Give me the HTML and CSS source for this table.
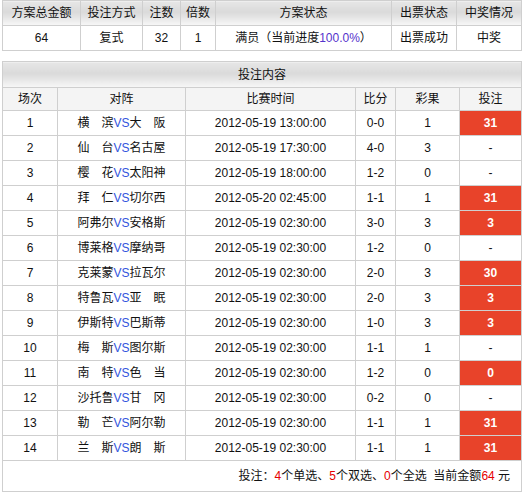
FILE: index.html
```html
<!DOCTYPE html>
<html>
<head>
<meta charset="utf-8">
<link rel="stylesheet" href="styles.css">
</head>
<body>
<div class="page">
<table class="summary">
  <colgroup>
    <col style="width:78px"><col style="width:62px"><col style="width:38px"><col style="width:35px"><col style="width:176px"><col style="width:65px"><col style="width:65px">
  </colgroup>
  <tr class="head">
    <th>方案总金额</th><th>投注方式</th><th>注数</th><th>倍数</th><th>方案状态</th><th>出票状态</th><th>中奖情况</th>
  </tr>
  <tr class="row">
    <td>64</td><td>复式</td><td>32</td><td>1</td><td>满员（当前进度<span class="pct">100.0%</span>）</td><td>出票成功</td><td>中奖</td>
  </tr>
</table>

<table class="detail">
  <colgroup>
    <col style="width:55px"><col style="width:128px"><col style="width:170px"><col style="width:40px"><col style="width:64px"><col style="width:62px">
  </colgroup>
  <tr class="title"><th colspan="6">投注内容</th></tr>
  <tr class="cols"><th>场次</th><th>对阵</th><th>比赛时间</th><th>比分</th><th>彩果</th><th>投注</th></tr>
  <tr class="row"><td>1</td><td>横　滨<span class="vs">VS</span>大　阪</td><td>2012-05-19 13:00:00</td><td>0-0</td><td>1</td><td class="hit">31</td></tr>
  <tr class="row"><td>2</td><td>仙　台<span class="vs">VS</span>名古屋</td><td>2012-05-19 17:30:00</td><td>4-0</td><td>3</td><td>-</td></tr>
  <tr class="row"><td>3</td><td>樱　花<span class="vs">VS</span>太阳神</td><td>2012-05-19 18:00:00</td><td>1-2</td><td>0</td><td>-</td></tr>
  <tr class="row"><td>4</td><td>拜　仁<span class="vs">VS</span>切尔西</td><td>2012-05-20 02:45:00</td><td>1-1</td><td>1</td><td class="hit">31</td></tr>
  <tr class="row"><td>5</td><td>阿弗尔<span class="vs">VS</span>安格斯</td><td>2012-05-19 02:30:00</td><td>3-0</td><td>3</td><td class="hit">3</td></tr>
  <tr class="row"><td>6</td><td>博莱格<span class="vs">VS</span>摩纳哥</td><td>2012-05-19 02:30:00</td><td>1-2</td><td>0</td><td>-</td></tr>
  <tr class="row"><td>7</td><td>克莱蒙<span class="vs">VS</span>拉瓦尔</td><td>2012-05-19 02:30:00</td><td>2-0</td><td>3</td><td class="hit">30</td></tr>
  <tr class="row"><td>8</td><td>特鲁瓦<span class="vs">VS</span>亚　眠</td><td>2012-05-19 02:30:00</td><td>2-0</td><td>3</td><td class="hit">3</td></tr>
  <tr class="row"><td>9</td><td>伊斯特<span class="vs">VS</span>巴斯蒂</td><td>2012-05-19 02:30:00</td><td>1-0</td><td>3</td><td class="hit">3</td></tr>
  <tr class="row"><td>10</td><td>梅　斯<span class="vs">VS</span>图尔斯</td><td>2012-05-19 02:30:00</td><td>1-1</td><td>1</td><td>-</td></tr>
  <tr class="row"><td>11</td><td>南　特<span class="vs">VS</span>色　当</td><td>2012-05-19 02:30:00</td><td>1-2</td><td>0</td><td class="hit">0</td></tr>
  <tr class="row"><td>12</td><td>沙托鲁<span class="vs">VS</span>甘　冈</td><td>2012-05-19 02:30:00</td><td>0-2</td><td>0</td><td>-</td></tr>
  <tr class="row"><td>13</td><td>勒　芒<span class="vs">VS</span>阿尔勒</td><td>2012-05-19 02:30:00</td><td>1-1</td><td>1</td><td class="hit">31</td></tr>
  <tr class="row"><td>14</td><td>兰　斯<span class="vs">VS</span>朗　斯</td><td>2012-05-19 02:30:00</td><td>1-1</td><td>1</td><td class="hit">31</td></tr>
  <tr class="foot"><td colspan="6">投注：<em>4</em>个单选、<em>5</em>个双选、<em>0</em>个全选&nbsp;&nbsp;当前金额<em>64</em>&nbsp;元</td></tr>
</table>
</div>
</body>
</html>
```

FILE: styles.css
```css
html, body {
  margin: 0;
  padding: 0;
  background: #fff;
}

.page {
  padding: 0 2px;
  font-family: "Liberation Sans", Arial, "Noto Sans CJK SC", sans-serif;
  font-size: 12px;
  color: #111;
}

table {
  border-collapse: collapse;
  table-layout: fixed;
  width: 520px;
}

th, td {
  border: 1px solid #cfcfcf;
  padding: 0;
  text-align: center;
  font-weight: normal;
  line-height: 14px;
  white-space: nowrap;
}

.summary .head th {
  height: 24px;
  background: linear-gradient(to bottom, #e6e6e6 0%, #dadada 45%, #f7f7f7 100%);
}

.summary .row td {
  height: 24px;
}

.pct {
  color: #5533cc;
}

.detail {
  margin-top: 10px;
}

.detail .title th {
  height: 25px;
  background: linear-gradient(to bottom, #e6e6e6 0%, #dadada 45%, #f7f7f7 100%);
}

.detail .cols th {
  height: 22px;
  background: #f4f4f4;
}

.detail .row td {
  height: 24px;
}

.vs {
  color: #3355dd;
}

.detail td.hit {
  background: #e8432a;
  color: #fff;
  font-weight: bold;
}

.detail .foot td {
  height: 30px;
  text-align: right;
  padding-right: 11px;
}

.foot em {
  font-style: normal;
  color: #e60000;
}
```
